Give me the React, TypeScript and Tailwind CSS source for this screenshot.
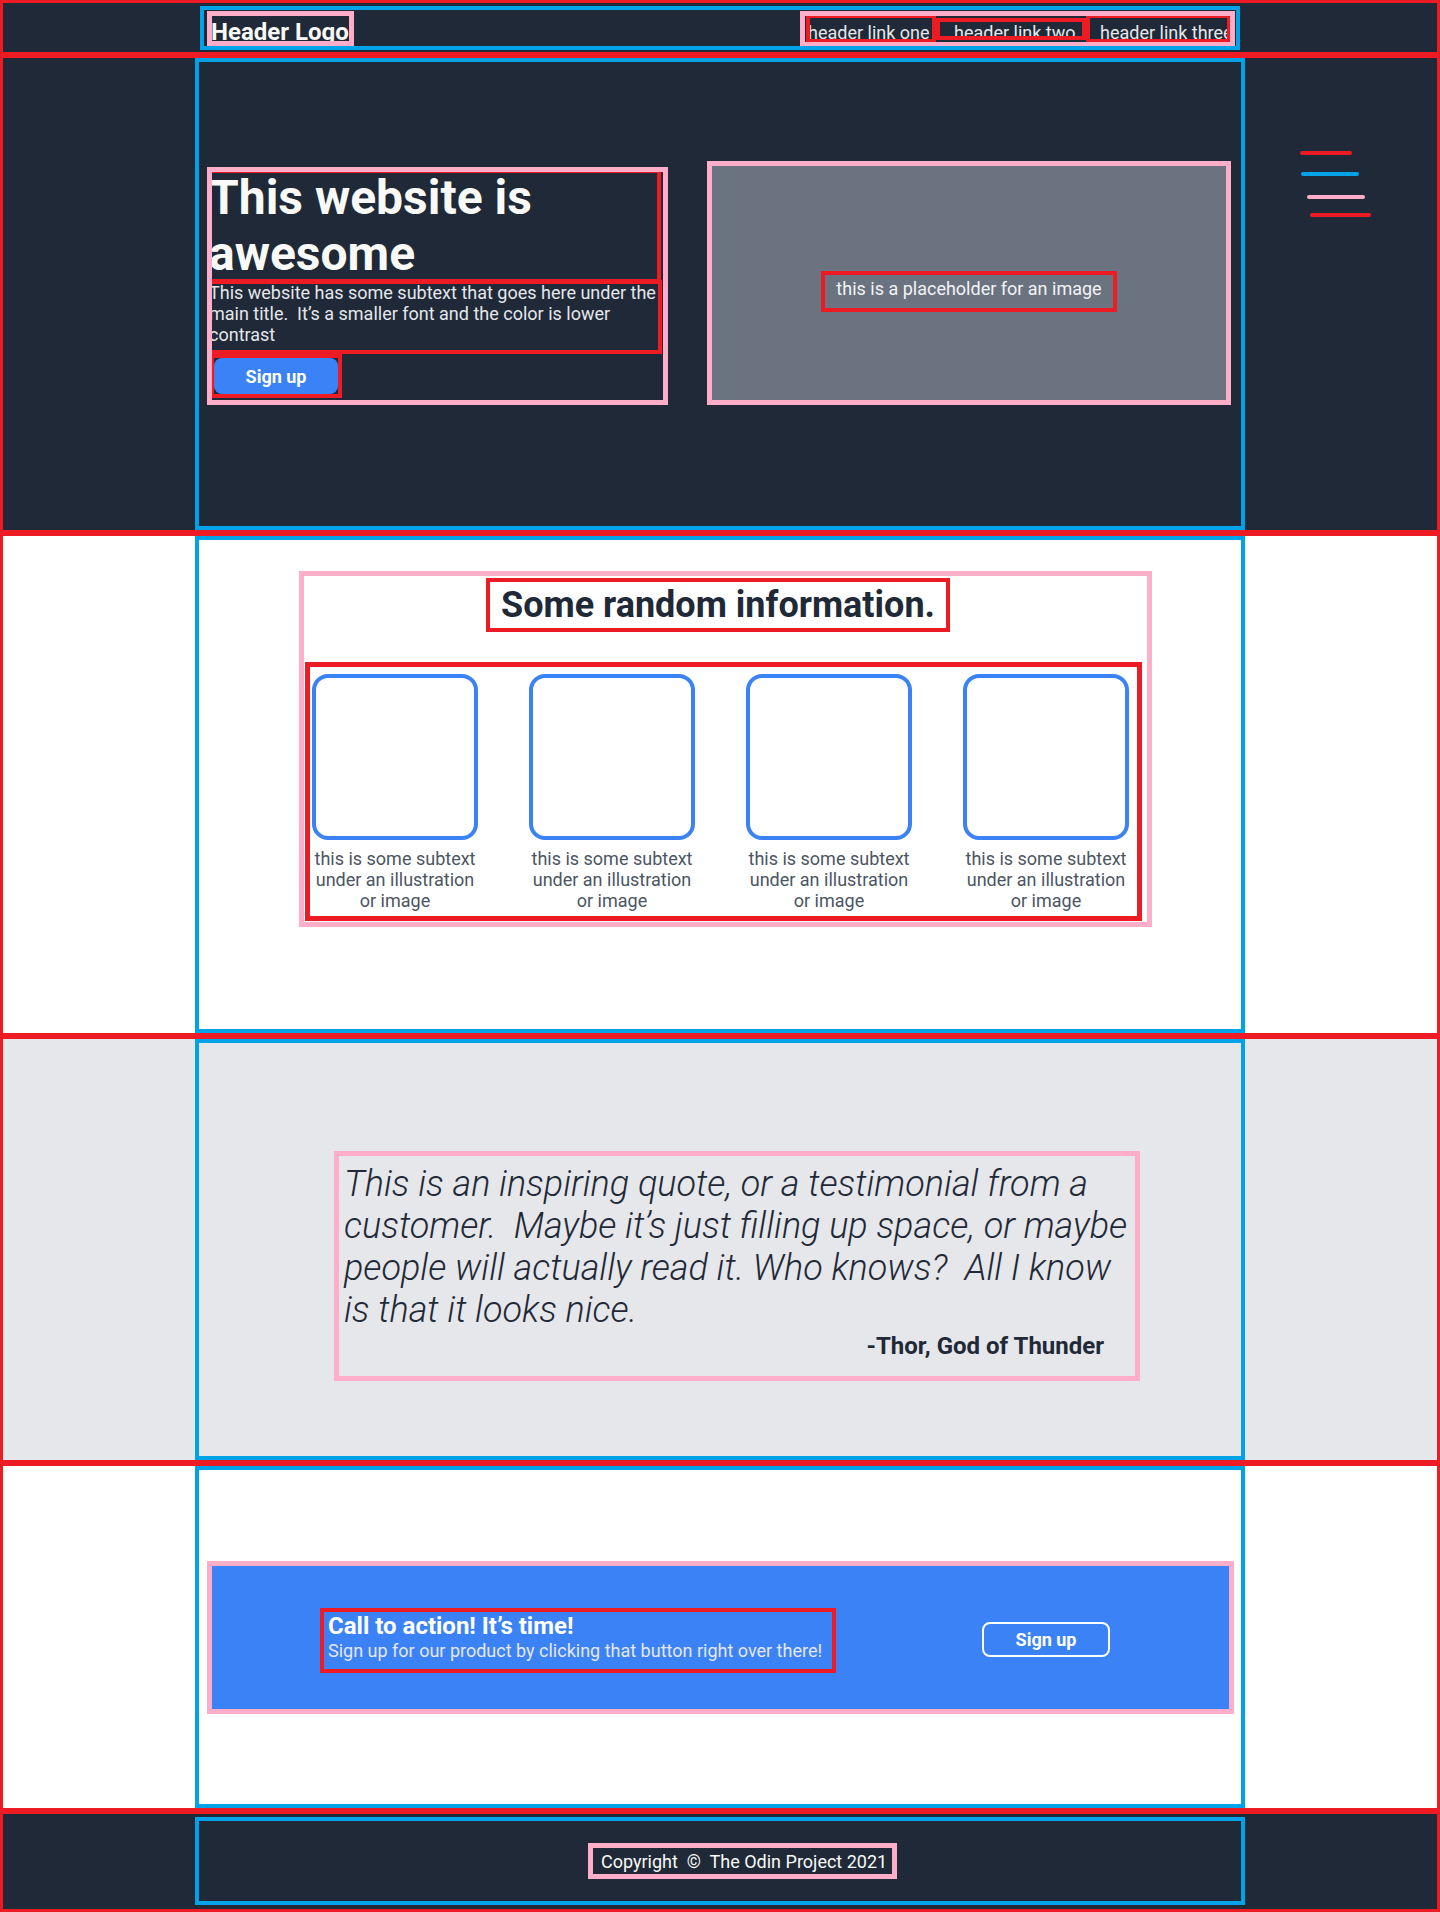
import React from "react";

// paint-style debug outlines drawn over the page
const red = "outline-[#ed1c24]";
const blue = "outline-[#00a2e8]";
const pink = "outline-[#ffaec9]";

const Header: React.FC = () => (
    <header className={`h-[55px] bg-[#1f2937] pt-[6px] outline-3 outline-offset-[-3px] ${red}`}>
        <div className={`mx-auto flex h-[44px] w-[1040px] items-start justify-between pl-[7px] pr-[5px] pt-[5px] outline-4 outline-offset-[-4px] ${blue}`}>
            <div className={`h-[35px] w-[147px] whitespace-nowrap pl-[4px] pt-[7px] text-[24px] font-bold leading-[28px] text-[#f9faf8] outline-5 outline-offset-[-5px] ${pink}`}>
                Header Logo
            </div>
            <nav className={`flex h-[36px] w-[435px] items-start pl-[6px] pt-[3px] text-[18px] leading-[21px] text-[#e5e7eb] outline-5 outline-offset-[-5px] ${pink}`}>
                <a className={`h-[29px] w-[130px] whitespace-nowrap pl-[2px] pt-[8px] outline-4 outline-offset-[-4px] ${red}`}>header link one</a>
                <a className={`mt-[4px] h-[22px] w-[150px] whitespace-nowrap pl-[18px] pt-[4px] outline-4 outline-offset-[-4px] ${red}`}>header link two</a>
                <a className={`h-[29px] w-[145px] whitespace-nowrap pl-[14px] pt-[8px] outline-4 outline-offset-[-4px] ${red}`}>header link three</a>
            </nav>
        </div>
    </header>
);

const Hero: React.FC = () => (
    <section className={`relative h-[478px] bg-[#1f2937] py-[3px] outline-3 outline-offset-[-3px] ${red}`}>
        <div className={`mx-auto flex h-full w-[1050px] items-start gap-[39px] pl-[12px] pt-[103px] outline-4 outline-offset-[-4px] ${blue}`}>
            <div className={`mt-[6px] h-[238px] w-[461px] pl-[2px] pt-[3px] outline-5 outline-offset-[-5px] ${pink}`}>
                <h1 className={`w-[451px] text-[48px] font-bold leading-[56px] text-[#f9faf8] outline-4 outline-offset-[-3px] ${red}`}>
                    This website is awesome
                </h1>
                <p className={`w-[451px] pb-[7px] text-[18px] leading-[21px] text-[#e5e7eb] outline-4 outline-offset-[-2px] ${red}`}>
                    This website has some subtext that goes here under the main title.&nbsp; It’s a smaller font and the color is lower contrast
                </p>
                <div className={`ml-[5px] mt-[6px] w-fit outline-4 ${red}`}>
                    <button className="h-[36px] w-[124px] rounded-lg bg-[#3b82f6] text-[18px] font-bold text-white">
                        Sign up
                    </button>
                </div>
            </div>
            <div className={`flex h-[244px] w-[524px] items-center justify-center bg-[#6b7280] pt-[16px] outline-5 outline-offset-[-5px] ${pink}`}>
                <span className={`px-[15px] pb-[13px] pt-[7px] text-[18px] leading-[21px] text-[#f3f4f6] outline-4 outline-offset-[-4px] ${red}`}>
                    this is a placeholder for an image
                </span>
            </div>
        </div>
        <svg className="absolute left-[1296px] top-[91px]" width="80" height="76" viewBox="0 0 80 76">
            <g strokeWidth="4" strokeLinecap="round" fill="none">
                <line x1="6" y1="7" x2="54" y2="7" stroke="#ed1c24" />
                <line x1="7" y1="28" x2="61" y2="28" stroke="#00a2e8" />
                <line x1="13" y1="51" x2="67" y2="51" stroke="#ffaec9" />
                <line x1="16" y1="69" x2="73" y2="69" stroke="#ed1c24" />
            </g>
        </svg>
    </section>
);

const cards = [1, 2, 3, 4];

const Info: React.FC = () => (
    <section className={`h-[503px] bg-white py-[3px] outline-3 outline-offset-[-3px] ${red}`}>
        <div className={`mx-auto h-full w-[1050px] pl-[104px] pt-[35px] outline-4 outline-offset-[-4px] ${blue}`}>
            <div className={`h-[356px] w-[853px] pt-[7px] outline-5 outline-offset-[-5px] ${pink}`}>
                <h2 className={`ml-[187px] w-fit whitespace-nowrap px-[15px] py-[6px] text-[36px] font-bold leading-[42px] text-[#1f2937] outline-4 outline-offset-[-4px] ${red}`}>
                    Some random information.
                </h2>
                <div className={`ml-[6px] mt-[30px] flex h-[259px] w-[837px] gap-[51px] pl-[7px] pt-[12px] outline-5 outline-offset-[-5px] ${red}`}>
                    {cards.map((c) => (
                        <div key={c} className="flex w-[166px] flex-col items-center">
                            <div className="h-[166px] w-[166px] rounded-2xl border-4 border-[#3b82f6]" />
                            <p className="mt-[8px] text-center text-[18px] leading-[21px] text-[#4b5563]">
                                this is some subtext under an illustration or image
                            </p>
                        </div>
                    ))}
                </div>
            </div>
        </div>
    </section>
);

const Quote: React.FC = () => (
    <section className={`h-[427px] bg-[#e5e7eb] py-[3px] outline-3 outline-offset-[-3px] ${red}`}>
        <div className={`mx-auto h-full w-[1050px] pl-[139px] pt-[112px] outline-4 outline-offset-[-4px] ${blue}`}>
            <div className={`h-[230px] w-[806px] pl-[10px] pt-[12px] outline-5 outline-offset-[-5px] ${pink}`}>
                <p className="w-[796px] text-[36px] font-light italic leading-[42px] text-[#1f2937]">
                    This is an inspiring quote, or a testimonial from a customer.&nbsp; Maybe it’s just filling up space, or maybe people will actually read it. Who knows?&nbsp; All I know is that it looks nice.
                </p>
                <p className="mt-[1px] w-[760px] text-right text-[24px] font-bold leading-[28px] text-[#1f2937]">
                    -Thor, God of Thunder
                </p>
            </div>
        </div>
    </section>
);

const CallToAction: React.FC = () => (
    <section className={`h-[348px] bg-white py-[3px] outline-3 outline-offset-[-3px] ${red}`}>
        <div className={`mx-auto h-full w-[1050px] pl-[12px] pt-[95px] outline-4 outline-offset-[-4px] ${blue}`}>
            <div className={`flex h-[153px] w-[1027px] items-center justify-between bg-[#3b82f6] pl-[113px] pr-[124px] outline-5 outline-offset-[-5px] ${pink}`}>
                <div className={`mt-[6px] whitespace-nowrap pb-[12px] pl-[8px] pr-[14px] pt-[4px] outline-4 outline-offset-[-4px] ${red}`}>
                    <h3 className="text-[24px] font-bold leading-[28px] text-white">Call to action! It’s time!</h3>
                    <p className="text-[18px] leading-[21px] text-[#e5e7eb]">
                        Sign up for our product by clicking that button right over there!
                    </p>
                </div>
                <button className="mt-[4px] h-[35px] w-[128px] rounded-lg border-2 border-white text-[18px] font-bold text-white">
                    Sign up
                </button>
            </div>
        </div>
    </section>
);

const Footer: React.FC = () => (
    <footer className={`h-[101px] bg-[#1f2937] pt-[6px] outline-3 outline-offset-[-3px] ${red}`}>
        <div className={`mx-auto h-[88px] w-[1050px] pl-[393px] pt-[26px] outline-4 outline-offset-[-4px] ${blue}`}>
            <div className={`h-[36px] w-[309px] whitespace-nowrap pl-[13px] pt-[8px] text-[18px] leading-[21px] text-[#f9faf8] outline-5 outline-offset-[-5px] ${pink}`}>
                Copyright&nbsp; ©&nbsp; The Odin Project 2021
            </div>
        </div>
    </footer>
);

export default function App() {
    return (
        <div className="min-h-screen bg-white font-['Roboto',sans-serif]">
            <Header />
            <Hero />
            <Info />
            <Quote />
            <CallToAction />
            <Footer />
        </div>
    );
}
